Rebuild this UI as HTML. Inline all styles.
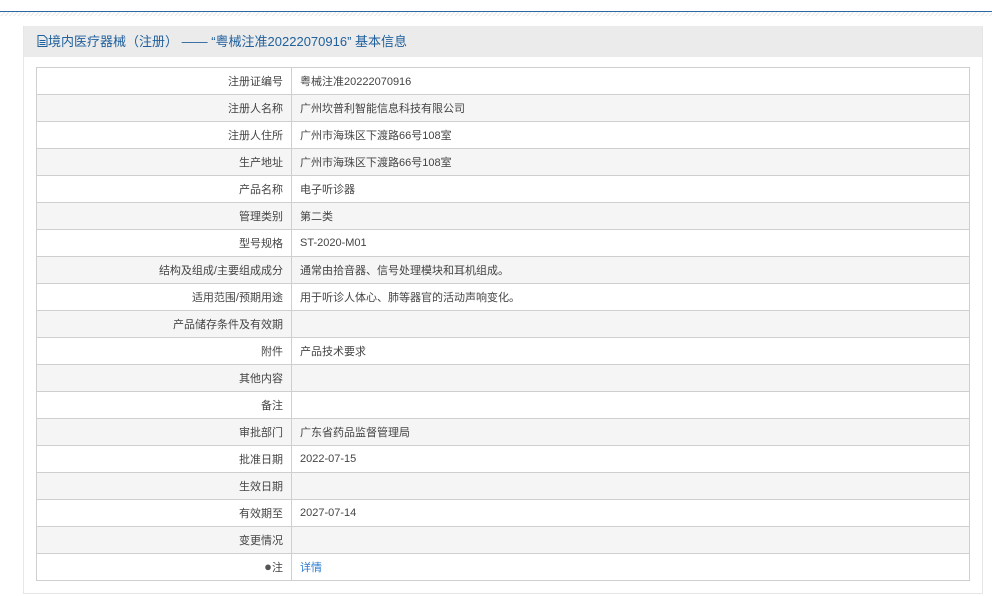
<!DOCTYPE html>
<html><head><meta charset="utf-8"><style>
*{margin:0;padding:0;box-sizing:border-box}
body{width:992px;height:596px;background:#fff;font-family:"Liberation Sans","Noto Sans CJK SC",sans-serif;position:relative;overflow:hidden}
.topline{position:absolute;left:0;top:11px;width:992px;height:1px;background:#2b68a3}
.hatch{position:absolute;left:0;top:12px;width:992px;height:4px;background:repeating-linear-gradient(135deg,#e8e8e8 0 1px,#fff 1px 3px)}
.panel{position:absolute;left:23px;top:26px;width:960px;height:568px;border:1px solid #e6e6e6;border-top:none}
.hd{height:31px;background:#ebebeb;color:#20609c;font-size:13px;line-height:31px;padding-left:13px}
table{position:absolute;left:12px;top:41px;width:934px;border-collapse:collapse;font-size:11px;color:#444}
td{height:27px;border:1px solid #cfcfcf;padding:0 8px;vertical-align:middle}
td.l{width:255px;text-align:right}
tr:nth-child(even) td{background:#f5f5f5}
a{color:#2a7ad0;text-decoration:none}
</style></head><body>
<div class="topline"></div><div class="hatch"></div>
<div class="panel">
<div class="hd"><svg width="11" height="12" viewBox="0 0 11 12" style="vertical-align:-1px"><path d="M1 .5h6l3 3v8H1z M2.5 5.5h6M2.5 7.5h6M2.5 9.5h6" fill="none" stroke="#20609c"/></svg>境内医疗器械（注册） —— “粤械注准20222070916” 基本信息</div>
<table>
<tr><td class="l">注册证编号</td><td>粤械注准20222070916</td></tr>
<tr><td class="l">注册人名称</td><td>广州坎普利智能信息科技有限公司</td></tr>
<tr><td class="l">注册人住所</td><td>广州市海珠区下渡路66号108室</td></tr>
<tr><td class="l">生产地址</td><td>广州市海珠区下渡路66号108室</td></tr>
<tr><td class="l">产品名称</td><td>电子听诊器</td></tr>
<tr><td class="l">管理类别</td><td>第二类</td></tr>
<tr><td class="l">型号规格</td><td>ST-2020-M01</td></tr>
<tr><td class="l">结构及组成/主要组成成分</td><td>通常由拾音器、信号处理模块和耳机组成。</td></tr>
<tr><td class="l">适用范围/预期用途</td><td>用于听诊人体心、肺等器官的活动声响变化。</td></tr>
<tr><td class="l">产品储存条件及有效期</td><td></td></tr>
<tr><td class="l">附件</td><td>产品技术要求</td></tr>
<tr><td class="l">其他内容</td><td></td></tr>
<tr><td class="l">备注</td><td></td></tr>
<tr><td class="l">审批部门</td><td>广东省药品监督管理局</td></tr>
<tr><td class="l">批准日期</td><td>2022-07-15</td></tr>
<tr><td class="l">生效日期</td><td></td></tr>
<tr><td class="l">有效期至</td><td>2027-07-14</td></tr>
<tr><td class="l">变更情况</td><td></td></tr>
<tr><td class="l"><span style="color:#555;font-size:13px">●</span>注</td><td><a>详情</a></td></tr>
</table>
</div>
</body></html>
